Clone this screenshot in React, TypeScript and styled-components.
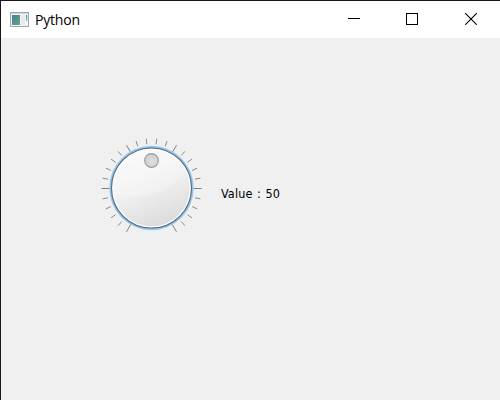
import React from 'react';
import styled, { createGlobalStyle } from 'styled-components';

const GlobalStyle = createGlobalStyle`
  * { box-sizing: border-box; }
  html, body { margin: 0; padding: 0; overflow: hidden; }
`;

const Window = styled.div`
  display: flex;
  flex-direction: column;
  width: 500px;
  height: 400px;
  background: #f0f0f0;
  border-top: 1px solid #18161a;
  border-left: 1px solid #18161a;
`;

const TitleBar = styled.header`
  display: flex;
  align-items: center;
  height: 37px;
  flex: none;
  padding-left: 9px;
  background: #fff;
`;

const AppIcon = styled.svg`
  display: block;
  flex: none;
  margin-right: 5px;
`;

const Title = styled.h1`
  flex: 1;
  margin: 0;
  font: 400 14px/20px 'Open Sans', 'Noto Sans', sans-serif;
  letter-spacing: -0.2px;
  color: #000;
`;

const CaptionButton = styled.button`
  display: flex;
  align-items: center;
  justify-content: center;
  width: 58px;
  height: 37px;
  padding: 0 0 2px;
  border: 0;
  background: transparent;

  svg { display: block; }
`;

const Buttons = styled.div`
  display: flex;
  padding-right: 1px;
`;

const Content = styled.main`
  display: flex;
  align-items: flex-start;
  padding: 100px 0 0 99px;
`;

const ValueLabel = styled.span`
  margin: 48px 0 0 19px;
  font: 400 12.5px/16px 'DejaVu Sans Condensed', 'DejaVu Sans', sans-serif;
  font-stretch: condensed;
  letter-spacing: 0.15px;
  word-spacing: 0.8px;
  white-space: pre;
  color: #000;
`;

const DialSvg = styled.svg`
  display: block;
  flex: none;
`;

const CX = 51.5;
const CY = 50.5;

// Notches run from 240° to -60°, with a long one every 60°.
const notches = Array.from({ length: 26 }, (_, i) => {
  const degrees = 240 - i * 12;
  const rad = (degrees * Math.PI) / 180;
  const major = i % 5 === 0;
  const inner = major ? 41 : 44.5;
  const outer = 50;
  return {
    key: i,
    major,
    x1: CX + inner * Math.cos(rad),
    y1: CY - inner * Math.sin(rad),
    x2: CX + outer * Math.cos(rad),
    y2: CY - outer * Math.sin(rad),
  };
});

function Dial() {
  return (
    <DialSvg width="102" height="102" viewBox="0 0 102 102" role="img" aria-label="Dial">
      <defs>
        <linearGradient id="face" x1="0.3" y1="0" x2="0.7" y2="1">
          <stop offset="0" stopColor="#fafafa" />
          <stop offset="0.45" stopColor="#f1f1f1" />
          <stop offset="1" stopColor="#dadada" />
        </linearGradient>
        <radialGradient id="handle" cx="0.55" cy="0.6" r="0.6">
          <stop offset="0" stopColor="#dedede" />
          <stop offset="1" stopColor="#cfcfcf" />
        </radialGradient>
        <radialGradient id="halo" gradientUnits="userSpaceOnUse" cx={CX} cy="50" r="43">
          <stop offset="0.93" stopColor="#82b9e6" />
          <stop offset="0.97" stopColor="#9dc9ee" />
          <stop offset="1" stopColor="#c8dff2" stopOpacity="0.3" />
        </radialGradient>
        <clipPath id="faceClip"><circle cx={CX} cy="50" r="38.5" /></clipPath>
      </defs>
      {notches.map((n) => (
        <line key={n.key} x1={n.x1} y1={n.y1} x2={n.x2} y2={n.y2}
          stroke={n.major ? '#808080' : '#8a8a8a'} strokeWidth="1" />
      ))}
      <circle cx={CX} cy="50" r="42.5" fill="url(#halo)" />
      <circle cx={CX} cy="50" r="40" fill="#fdfdfd" stroke="#56697a" strokeWidth="1.1" />
      <circle cx={CX} cy="50" r="38.3" fill="url(#face)" />
      <path d="M8 8H94V14C88 34 76 48 60 54C42 60 24 59 8 53Z" fill="#fff" fillOpacity="0.2" clipPath="url(#faceClip)" />
      <circle cx="51.5" cy="22.5" r="6.8" fill="url(#handle)" stroke="#9c9c9c" strokeWidth="1.2" />
    </DialSvg>
  );
}

export default function App() {
  return (
    <>
      <GlobalStyle />
      <Window>
        <TitleBar>
          <AppIcon width="20" height="16" viewBox="0 0 20 16">
            <defs>
              <linearGradient id="screen" x1="0" y1="0" x2="1" y2="1">
                <stop offset="0" stopColor="#467b9e" />
                <stop offset="1" stopColor="#62ad7c" />
              </linearGradient>
              <linearGradient id="sideBar" x1="0" y1="0" x2="0" y2="1">
                <stop offset="0" stopColor="#5684b8" />
                <stop offset="1" stopColor="#75c69c" />
              </linearGradient>
            </defs>
            <rect x="0.5" y="0.5" width="18" height="14" fill="#f3f4f5" stroke="#a1a6ac" />
            <rect x="1" y="1" width="17" height="1" fill="#cfd3d6" />
            <rect x="2" y="3" width="8" height="10" fill="url(#screen)" />
            <rect x="11" y="3" width="4" height="10" fill="#e9eaec" />
            <rect x="16" y="3" width="1.2" height="6" fill="url(#sideBar)" />
          </AppIcon>
          <Title>Python</Title>
          <Buttons>
            <CaptionButton aria-label="Minimize">
              <svg width="12" height="13" viewBox="0 0 12 13"><path d="M0 6.5H12" stroke="#000" /></svg>
            </CaptionButton>
            <CaptionButton aria-label="Maximize">
              <svg width="12" height="13" viewBox="0 0 12 13"><rect x="0.5" y="1.5" width="11" height="11" fill="none" stroke="#000" /></svg>
            </CaptionButton>
            <CaptionButton aria-label="Close">
              <svg width="14" height="13" viewBox="0 0 14 13"><path d="M2.2 1.2L13.8 12.8M13.8 1.2L2.2 12.8" stroke="#000" strokeWidth="1.1" /></svg>
            </CaptionButton>
          </Buttons>
        </TitleBar>
        <Content>
          <Dial />
          <ValueLabel>Value : 50</ValueLabel>
        </Content>
      </Window>
    </>
  );
}
